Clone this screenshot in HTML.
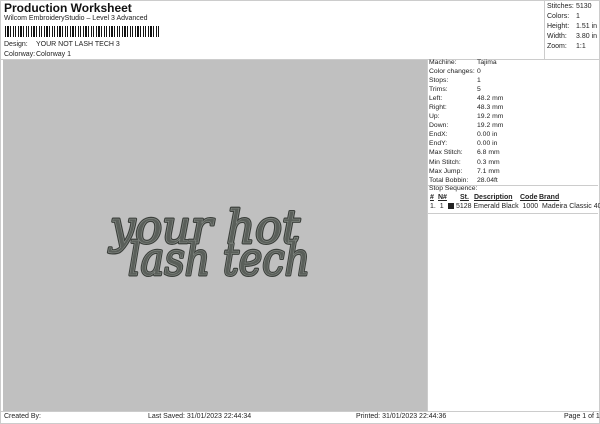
<!DOCTYPE html><html><head><style>
body{margin:0;width:600px;height:424px;background:#fff;font-family:"Liberation Sans",sans-serif;font-size:7px;color:#222;position:relative;overflow:hidden}
.a{position:absolute;white-space:nowrap}
</style></head><body>
<div class="a" style="left:0;top:0;width:598px;height:422px;border:1px solid #ccc"></div>
<div class="a" style="left:4px;top:1px;font-size:12px;font-weight:bold;color:#111">Production Worksheet</div>
<div class="a" style="left:4px;top:15px;">Wilcom EmbroideryStudio – Level 3 Advanced</div>
<div class="a" style="left:5px;top:26px;width:154px;height:11px;background:repeating-linear-gradient(90deg,#111 0 1px,#fff 1px 2px,#111 2px 4px,#fff 4px 5px,#111 5px 6px,#fff 6px 8px,#111 8px 9px,#fff 9px 10px,#111 10px 11px,#fff 11px 13px)"></div>
<div class="a" style="left:4px;top:41px;">Design:</div><div class="a" style="left:36px;top:41px;">YOUR NOT LASH TECH 3</div>
<div class="a" style="left:4px;top:51px;">Colorway:</div><div class="a" style="left:36px;top:51px;">Colorway 1</div>
<div class="a" style="left:544px;top:0;width:1px;height:60px;background:#ccc"></div>
<div class="a" style="left:547px;top:2px;line-height:10px">Stitches:<br>Colors:<br>Height:<br>Width:<br>Zoom:</div>
<div class="a" style="left:576px;top:2px;line-height:10px">5130<br>1<br>1.51 in<br>3.80 in<br>1:1</div>
<div class="a" style="left:1px;top:59px;width:598px;height:1px;background:#ccc"></div>
<div class="a" style="left:3px;top:60px;width:424px;height:351px;background:#c0c0c0"></div>
<div class="a" style="left:427px;top:60px;width:1px;height:351px;background:#ccc"></div>
<div class="a" style="left:429px;top:58px;line-height:9.05px;font-size:6.8px">Machine:<br>Color changes:<br>Stops:<br>Trims:<br>Left:<br>Right:<br>Up:<br>Down:<br>EndX:<br>EndY:<br>Max Stitch:<br>Min Stitch:<br>Max Jump:<br>Total Bobbin:</div>
<div class="a" style="left:477px;top:58px;line-height:9.05px;font-size:6.8px">Tajima<br>0<br>1<br>5<br>48.2 mm<br>48.3 mm<br>19.2 mm<br>19.2 mm<br>0.00 in<br>0.00 in<br>6.8 mm<br>0.3 mm<br>7.1 mm<br>28.04ft</div>
<div class="a" style="left:428px;top:185px;width:170px;height:1px;background:#ccc"></div>
<div class="a" style="left:429px;top:185px;font-size:6.8px">Stop Sequence:</div>
<div class="a" style="left:430px;top:194px;font-weight:bold;text-decoration:underline">#</div>
<div class="a" style="left:438px;top:194px;font-weight:bold;text-decoration:underline">N#</div>
<div class="a" style="left:460px;top:194px;font-weight:bold;text-decoration:underline">St.</div>
<div class="a" style="left:474px;top:194px;font-weight:bold;text-decoration:underline">Description</div>
<div class="a" style="left:520px;top:194px;font-weight:bold;text-decoration:underline">Code</div>
<div class="a" style="left:539px;top:194px;font-weight:bold;text-decoration:underline">Brand</div>
<div class="a" style="left:430px;top:203px;">1.&nbsp; 1</div>
<div class="a" style="left:448px;top:203px;width:6px;height:6px;background:#222"></div>
<div class="a" style="left:456px;top:203px;">5128&nbsp;Emerald Black&nbsp; 1000&nbsp; Madeira Classic 40</div>
<div class="a" style="left:428px;top:213px;width:170px;height:1px;background:#ccc"></div>
<div class="a" style="left:1px;top:411px;width:598px;height:1px;background:#ccc"></div>
<div class="a" style="left:4px;top:413px;">Created By:</div>
<div class="a" style="left:148px;top:413px;">Last Saved: 31/01/2023 22:44:34</div>
<div class="a" style="left:356px;top:413px;">Printed: 31/01/2023 22:44:36</div>
<div class="a" style="left:564px;top:413px;">Page 1 of 1</div>
<svg class="a" style="left:0;top:0" width="600" height="424">
<g font-family="'DejaVu Serif',serif" font-style="italic" font-size="46" fill="none" stroke="#3c403c" stroke-width="3" stroke-linejoin="round">
<text x="110" y="243" textLength="190" lengthAdjust="spacingAndGlyphs">your hot</text>
<text x="128" y="275" textLength="182" lengthAdjust="spacingAndGlyphs">lash tech</text>
</g>
<g font-family="'DejaVu Serif',serif" font-style="italic" font-size="46" fill="#5a5f5a" stroke="#8a8f8a" stroke-width="0.6">
<text x="110" y="243" textLength="190" lengthAdjust="spacingAndGlyphs">your hot</text>
<text x="128" y="275" textLength="182" lengthAdjust="spacingAndGlyphs">lash tech</text>
</g></svg>
</body></html>
